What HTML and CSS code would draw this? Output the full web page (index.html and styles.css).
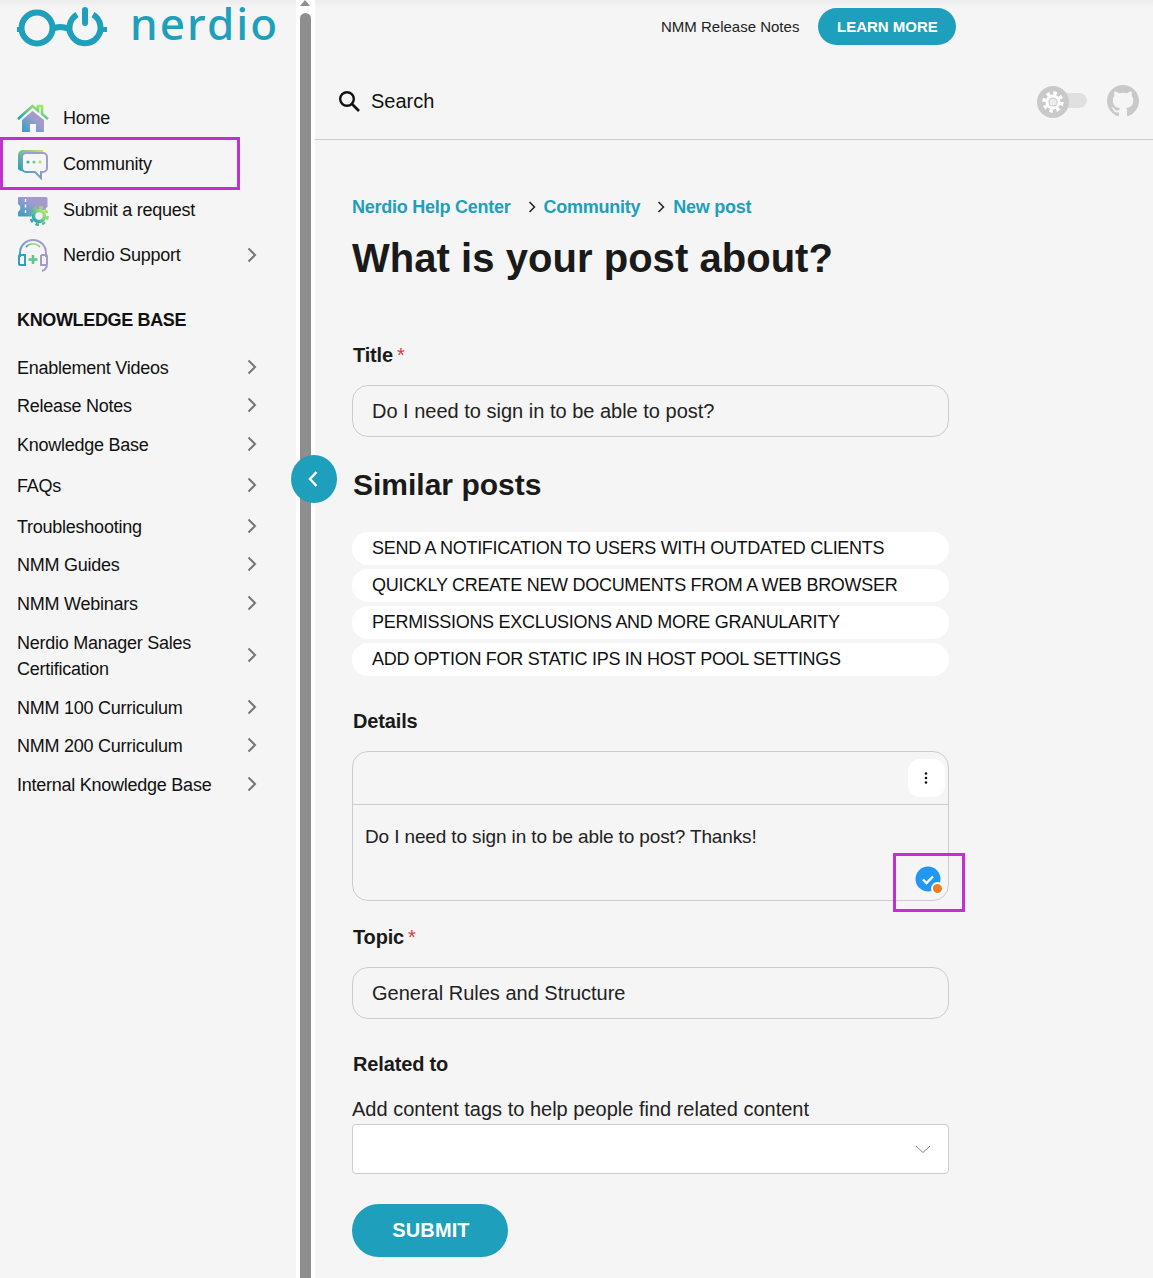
FILE: index.html
```html
<!DOCTYPE html>
<html lang="en">
<head>
<meta charset="utf-8">
<title>What is your post about?</title>
<link rel="stylesheet" href="styles.css">
</head>
<body>
<svg class="defs" width="0" height="0" aria-hidden="true">
  <defs>
    <linearGradient id="g1" x1="0" y1="1" x2="1" y2="0">
      <stop offset="0" stop-color="#2f9fc4"/><stop offset=".6" stop-color="#a39ccb"/><stop offset="1" stop-color="#a39ccb"/>
    </linearGradient>
    <linearGradient id="g2" x1="0" y1="1" x2="1" y2="0">
      <stop offset="0" stop-color="#1c9dbc"/><stop offset="1" stop-color="#b6f05c"/>
    </linearGradient>
    <path id="chevron" d="M1.500 1.500 8 8l-6.500 6.500" fill="none" stroke="#777" stroke-width="2"/>
  </defs>
</svg>
<div class="app">
  <aside class="sidebar">
    <a class="logo">
      <svg class="logo-svg" viewBox="0 0 262 48" width="262" height="48">
        <g fill="none" stroke="#1e9fbb" stroke-width="6">
          <circle cx="20" cy="28" r="15.500"/>
          <path d="M35 29 Q43 25 52 29"/>
          <path d="M76 14.500 A15.500 15.500 0 1 1 60 14.500"/>
          <path d="M68 10 V23" stroke-linecap="round"/>
        </g>
        <path d="M0 27h4v5H0zM84 27h6v5h-6z" fill="#1e9fbb"/>
        <text class="logo-text" x="113" y="40" textLength="147" lengthAdjust="spacing">nerdio</text>
      </svg>
    </a>
    <nav class="primary">
      <div class="nav-row">
        <svg class="nav-icon" viewBox="0 0 32 30" width="32" height="30"><path d="M1 15 15.500 2 21 6.500V2h4v8l6 5" fill="none" stroke="url(#g2)" stroke-width="2.600"/><path d="M5 16 15.500 7 27 16v12H19v-8h-6v8H5z" fill="url(#g1)"/></svg>
        <span>Home</span>
      </div>
      <div class="nav-row">
        <svg class="nav-icon" viewBox="0 0 32 32" width="32" height="32"><path d="M1 20V6a5 5 0 0 1 5-5h20v3H9a4 4 0 0 0-4 4v10a4 4 0 0 0 2 4H6a5 5 0 0 1-5-2z" fill="url(#g2)"/><path d="M9 4h17a4 4 0 0 1 4 4v11a4 4 0 0 1-4 4h-2v6l-6-6H9a4 4 0 0 1-4-4V8a4 4 0 0 1 4-4z" fill="none" stroke="url(#g1)" stroke-width="2"/><circle cx="11" cy="13" r="1.600" fill="#3fb6a8"/><circle cx="17" cy="13" r="1.600" fill="#6ccf8d"/><circle cx="23" cy="13" r="1.600" fill="#a6e36b"/></svg>
        <span>Community</span>
      </div>
      <div class="nav-row">
        <svg class="nav-icon" viewBox="0 0 32 32" width="32" height="32"><path d="M2 3h27a1.500 1.500 0 0 1 1.500 1.500V13a3 3 0 0 0-2 3h-9l-5 4v2.500H2a1 1 0 0 1-1-1V18a4.500 4.500 0 0 0 0-8V4a1 1 0 0 1 1-1z" fill="url(#g1)"/><path d="M8.500 5v3M8.500 10.500v3M8.500 16v3" stroke="#fff" stroke-width="1.400"/><circle cx="22" cy="22" r="5.500" fill="#f5f5f5" stroke="url(#g2)" stroke-width="3.500"/><circle cx="22" cy="22" r="8.600" fill="none" stroke="url(#g2)" stroke-width="2.600" stroke-dasharray="3.500 3.250"/></svg>
        <span>Submit a request</span>
      </div>
      <div class="nav-row">
        <svg class="nav-icon" viewBox="0 0 32 34" width="32" height="34"><path d="M3 18v-4a13 13 0 0 1 26 0v4" fill="none" stroke="url(#g1)" stroke-width="2"/><path d="M9 8a9 9 0 0 1 14 0" fill="none" stroke="url(#g2)" stroke-width="1.500"/><path d="M3 16h5v10H3a1 1 0 0 1-1-1v-8a1 1 0 0 1 1-1z" fill="none" stroke="#2f9fc4" stroke-width="2"/><path d="M24 16h5a1 1 0 0 1 1 1v8c0 4-2 6-5 7" fill="none" stroke="#a39ccb" stroke-width="2"/><path d="M24 16v10h5" fill="none" stroke="#a39ccb" stroke-width="2"/><path d="M16 16v9M11.500 20.500h9" stroke="#57c98a" stroke-width="2.600"/></svg>
        <span class="grow">Nerdio Support</span>
        <svg class="chev" viewBox="0 0 10 16" width="10" height="16"><use href="#chevron"/></svg>
      </div>
    </nav>
    <h2 class="kb-title">KNOWLEDGE BASE</h2>
    <ul class="kb-list">
      <li class="kb-row"><span>Enablement Videos</span><svg class="chev" viewBox="0 0 10 16" width="10" height="16"><use href="#chevron"/></svg></li>
      <li class="kb-row"><span>Release Notes</span><svg class="chev" viewBox="0 0 10 16" width="10" height="16"><use href="#chevron"/></svg></li>
      <li class="kb-row"><span>Knowledge Base</span><svg class="chev" viewBox="0 0 10 16" width="10" height="16"><use href="#chevron"/></svg></li>
      <li class="kb-row tall"><span>FAQs</span><svg class="chev" viewBox="0 0 10 16" width="10" height="16"><use href="#chevron"/></svg></li>
      <li class="kb-row"><span>Troubleshooting</span><svg class="chev" viewBox="0 0 10 16" width="10" height="16"><use href="#chevron"/></svg></li>
      <li class="kb-row"><span>NMM Guides</span><svg class="chev" viewBox="0 0 10 16" width="10" height="16"><use href="#chevron"/></svg></li>
      <li class="kb-row"><span>NMM Webinars</span><svg class="chev" viewBox="0 0 10 16" width="10" height="16"><use href="#chevron"/></svg></li>
      <li class="kb-row double"><span>Nerdio Manager Sales Certification</span><svg class="chev" viewBox="0 0 10 16" width="10" height="16"><use href="#chevron"/></svg></li>
      <li class="kb-row"><span>NMM 100 Curriculum</span><svg class="chev" viewBox="0 0 10 16" width="10" height="16"><use href="#chevron"/></svg></li>
      <li class="kb-row"><span>NMM 200 Curriculum</span><svg class="chev" viewBox="0 0 10 16" width="10" height="16"><use href="#chevron"/></svg></li>
      <li class="kb-row"><span>Internal Knowledge Base</span><svg class="chev" viewBox="0 0 10 16" width="10" height="16"><use href="#chevron"/></svg></li>
    </ul>
    <div class="highlight highlight-nav"></div>
  </aside>

  <div class="scrollbar"><span class="scroll-arrow"></span><span class="scroll-thumb"></span></div>

  <button class="collapse" aria-label="Collapse"><svg viewBox="0 0 12 20" width="12" height="20"><path d="M9.500 3 3 10l6.500 7" fill="none" stroke="#fff" stroke-width="2.400"/></svg></button>

  <main class="main">
    <div class="notice">
      <span>NMM Release Notes</span>
      <a class="learn">LEARN MORE</a>
    </div>
    <header class="searchbar">
      <svg viewBox="0 0 22 22" width="22" height="22"><circle cx="9" cy="9" r="6.800" fill="none" stroke="#111" stroke-width="2.400"/><path d="M14 14l7 7" stroke="#111" stroke-width="2.600"/></svg>
      <span class="search-label">Search</span>
      <div class="tools">
        <div class="toggle">
          <span class="toggle-track"></span>
          <span class="toggle-knob"><svg viewBox="0 0 24 24" width="24" height="24"><circle cx="12" cy="12" r="7.500" fill="#fff"/><circle cx="12" cy="12" r="9" fill="none" stroke="#fff" stroke-width="3.400" stroke-dasharray="3.570 3.500"/><circle cx="12" cy="12" r="4.600" fill="#c9c9c9"/><circle cx="12" cy="12" r="3.600" fill="#eee"/></svg></span>
        </div>
        <svg class="github" viewBox="0 0 16 16" width="32" height="32"><path fill="#c9c9c9" d="M8 0C3.580 0 0 3.580 0 8c0 3.540 2.290 6.530 5.470 7.590.4.070.55-.17.55-.38 0-.19-.01-.82-.01-1.490-2.010.37-2.530-.49-2.690-.94-.09-.23-.48-.94-.82-1.130-.28-.15-.68-.52-.01-.53.63-.01 1.080.58 1.230.82.720 1.210 1.870.87 2.330.66.070-.52.280-.87.510-1.070-1.780-.2-3.640-.89-3.640-3.950 0-.87.310-1.590.820-2.150-.08-.2-.36-1.020.08-2.120 0 0 .67-.21 2.200.82.640-.18 1.320-.27 2-.27s1.360.09 2 .27c1.530-1.040 2.200-.82 2.200-.82.440 1.100.16 1.920.08 2.120.51.560.82 1.270.82 2.150 0 3.070-1.870 3.750-3.650 3.950.29.25.54.73.54 1.480 0 1.070-.01 1.930-.01 2.200 0 .21.150.46.550.38A8.010 8.010 0 0 0 16 8c0-4.420-3.580-8-8-8z"/></svg>
      </div>
    </header>

    <section class="content">
      <nav class="crumbs">
        <a>Nerdio Help Center</a>
        <svg viewBox="0 0 8 12" width="8" height="12"><path d="M1.500 1 6.500 6l-5 5" fill="none" stroke="#222" stroke-width="1.500"/></svg>
        <a>Community</a>
        <svg viewBox="0 0 8 12" width="8" height="12"><path d="M1.500 1 6.500 6l-5 5" fill="none" stroke="#222" stroke-width="1.500"/></svg>
        <a>New post</a>
      </nav>
      <h1 class="page-title">What is your post about?</h1>

      <label class="field-label label-title">Title<em>*</em></label>
      <div class="input">Do I need to sign in to be able to post?</div>

      <h2 class="similar-title">Similar posts</h2>
      <ul class="similar">
        <li>SEND A NOTIFICATION TO USERS WITH OUTDATED CLIENTS</li>
        <li>QUICKLY CREATE NEW DOCUMENTS FROM A WEB BROWSER</li>
        <li>PERMISSIONS EXCLUSIONS AND MORE GRANULARITY</li>
        <li>ADD OPTION FOR STATIC IPS IN HOST POOL SETTINGS</li>
      </ul>

      <label class="field-label label-details">Details</label>
      <div class="editor">
        <div class="editor-bar">
          <button class="more" aria-label="More"><svg viewBox="0 0 4 14" width="4" height="14"><circle cx="2" cy="2.500" r="1.300" fill="#111"/><circle cx="2" cy="7" r="1.300" fill="#111"/><circle cx="2" cy="11.500" r="1.300" fill="#111"/></svg></button>
        </div>
        <div class="editor-body">Do I need to sign in to be able to post? Thanks!</div>
        <span class="check"><svg viewBox="0 0 26 26" width="26" height="26"><circle cx="13" cy="13" r="12.500" fill="#2196f3"/><path d="M8 13.500l3.500 3.500L18 10.500" fill="none" stroke="#fff" stroke-width="2.400"/></svg><i class="check-dot"></i></span>
        <div class="highlight highlight-check"></div>
      </div>

      <label class="field-label label-topic">Topic<em>*</em></label>
      <div class="input">General Rules and Structure</div>

      <label class="field-label label-related">Related to</label>
      <p class="hint">Add content tags to help people find related content</p>
      <div class="select"><svg viewBox="0 0 16 9" width="16" height="9"><path d="M1 1l7 6.500L15 1" fill="none" stroke="#888" stroke-width="1"/></svg></div>

      <button class="submit">SUBMIT</button>
    </section>
  </main>
</div>
</body>
</html>
```
FILE: styles.css
```css
* { box-sizing: border-box; }
html, body { margin: 0; padding: 0; height: 1278px; overflow: hidden; }
body { background: linear-gradient(#ececec, #f5f5f5 8px); color: #111; font-family: "Liberation Sans", Arial, sans-serif; font-size: 18px; }
.defs { position: absolute; }
a { color: inherit; text-decoration: none; }
ul { list-style: none; margin: 0; padding: 0; }
button { border: 0; font-family: inherit; cursor: pointer; }

.app { position: relative; display: flex; height: 1278px; }

.sidebar { position: relative; width: 296px; flex: none; padding: 0 0 0 17px; letter-spacing: -.25px; }
.logo { display: block; height: 48px; }
.logo-svg { display: block; overflow: visible; }
.logo-text { font-family: "Noto Sans", sans-serif; font-size: 44px; font-weight: 500; fill: #1e9fbb; }

.primary { margin-top: 48px; display: flex; flex-direction: column; width: 240px; }
.nav-row { display: flex; align-items: center; gap: 14px; height: 45.7px; }
.nav-icon { flex: none; width: 32px; margin-right: 0; }
.grow { flex: 1; }
.chev { flex: none; margin-top: -2px; }

.kb-title { margin: 29px 0 0; font-size: 18px; line-height: 24px; font-weight: 700; letter-spacing: -.35px; }
.kb-list { margin-top: 16.700px; width: 240px; }
.kb-row { display: flex; align-items: center; justify-content: space-between; height: 38.5px; line-height: 26px; }
.kb-row.tall { height: 43.5px; }
.kb-row.double { height: 65.5px; }
.kb-row.double span { width: 190px; }

.highlight { position: absolute; border: 3px solid #c42fd2; pointer-events: none; }
.highlight-nav { left: 0; top: 137px; width: 240px; height: 53px; }

.scrollbar { position: relative; width: 19px; flex: none; background: #fff; padding: 13px 4px 0; }
.scroll-thumb { display: block; height: 100%; background: #8e8e8e; border-radius: 6px 6px 0 0; }
.scroll-arrow { position: absolute; left: 4px; top: 0; width: 0; height: 0; border-left: 5.500px solid transparent; border-right: 5.500px solid transparent; border-bottom: 6px solid #8e8e8e; }

.collapse { position: absolute; left: 291px; top: 455px; width: 46px; height: 48px; border-radius: 50%; background: #1e9fbb; display: flex; align-items: center; justify-content: center; padding: 0 2px 0 0; z-index: 2; }

.main { flex: 1; min-width: 0; }
.notice { display: flex; align-items: center; gap: 19px; height: 37px; margin-top: 8px; padding-left: 346px; font-size: 15px; color: #222; }
.learn { display: flex; align-items: center; justify-content: center; width: 138px; height: 37px; border-radius: 19px; background: #1e9fbb; color: #fff; font-weight: 700; font-size: 15px; }

.searchbar { display: flex; align-items: center; height: 95px; padding: 18px 14px 0 23px; border-bottom: 1px solid #ccc; }
.search-label { margin-left: 11px; font-size: 20px; flex: 1; }
.tools { display: flex; align-items: center; gap: 20px; }
.toggle { position: relative; width: 50px; height: 32px; margin-top: 2px; }
.toggle-track { position: absolute; left: 20px; top: 7px; width: 30px; height: 15px; border-radius: 8px; background: #e0e0e0; }
.toggle-knob { position: absolute; left: 0; top: 0; width: 32px; height: 32px; border-radius: 50%; background: #c9c9c9; display: flex; align-items: center; justify-content: center; }

.content { padding: 0 0 0 37px; width: 634px; }
.crumbs { display: flex; align-items: center; gap: 8px; margin-top: 55px; height: 24px; color: #1e9fbb; font-weight: 700; font-size: 18px; letter-spacing: -.25px; }
.crumbs svg { margin-left: 9px; }
.page-title { margin: 16px 0 0; font-size: 40px; line-height: 46px; font-weight: 700; letter-spacing: .04px; color: #1a1a1a; }

.field-label { display: block; font-size: 20px; font-weight: 700; line-height: 24px; color: #1a1a1a; padding-left: 1px; letter-spacing: -.15px; }
.field-label em { color: #e8343a; font-style: normal; font-weight: 400; margin-left: 4px; }
.label-title { margin-top: 62px; }
.label-details { margin-top: 33px; }
.label-topic { margin-top: 24px; }
.label-related { margin-top: 33px; }

.input { margin-top: 18px; height: 52px; border: 1px solid #ccc; border-radius: 16px; padding-left: 19px; display: flex; align-items: center; font-size: 20px; color: #222; }

.similar-title { margin: 28px 0 0; font-size: 30px; line-height: 40px; font-weight: 700; color: #1a1a1a; padding-left: 1px; }
.similar { margin-top: 27px; display: flex; flex-direction: column; gap: 4px; }
.similar li { height: 33px; border-radius: 16px; background: #fff; padding-left: 20px; line-height: 32px; font-size: 18px; letter-spacing: -.29px; color: #111; }

.editor { position: relative; margin-top: 18px; height: 150px; border: 1px solid #ccc; border-radius: 16px; }
.editor-bar { height: 53px; border-bottom: 1px solid #ccc; display: flex; justify-content: flex-end; align-items: flex-start; padding: 7px 3px 0 0; }
.more { width: 37px; height: 38px; border-radius: 12px; background: #fff; display: flex; align-items: center; justify-content: center; padding: 0 2px 0 0; }
.editor-body { padding: 20px 12px; font-size: 19px; letter-spacing: -.13px; line-height: 24px; color: #222; }
.check { position: absolute; right: 7px; bottom: 8px; width: 26px; height: 26px; }
.check svg { display: block; }
.check-dot { position: absolute; right: -3px; bottom: -3px; width: 13px; height: 13px; border-radius: 50%; background: #f47b20; border: 2px solid #fff; }
.highlight-check { right: -17px; top: 101px; width: 72px; height: 59px; }

.hint { margin: 21px 0 0; font-size: 20px; line-height: 24px; color: #222; }
.select { margin-top: 3px; height: 50px; background: #fff; border: 1px solid #ccc; border-radius: 4px; display: flex; align-items: center; justify-content: flex-end; padding-right: 17px; }
.submit { display: block; margin-top: 30px; width: 156px; height: 53px; border-radius: 27px; background: #1e9fbb; color: #fff; font-weight: 700; font-size: 20px; letter-spacing: .1px; padding: 0 0 0 2px; }
```
